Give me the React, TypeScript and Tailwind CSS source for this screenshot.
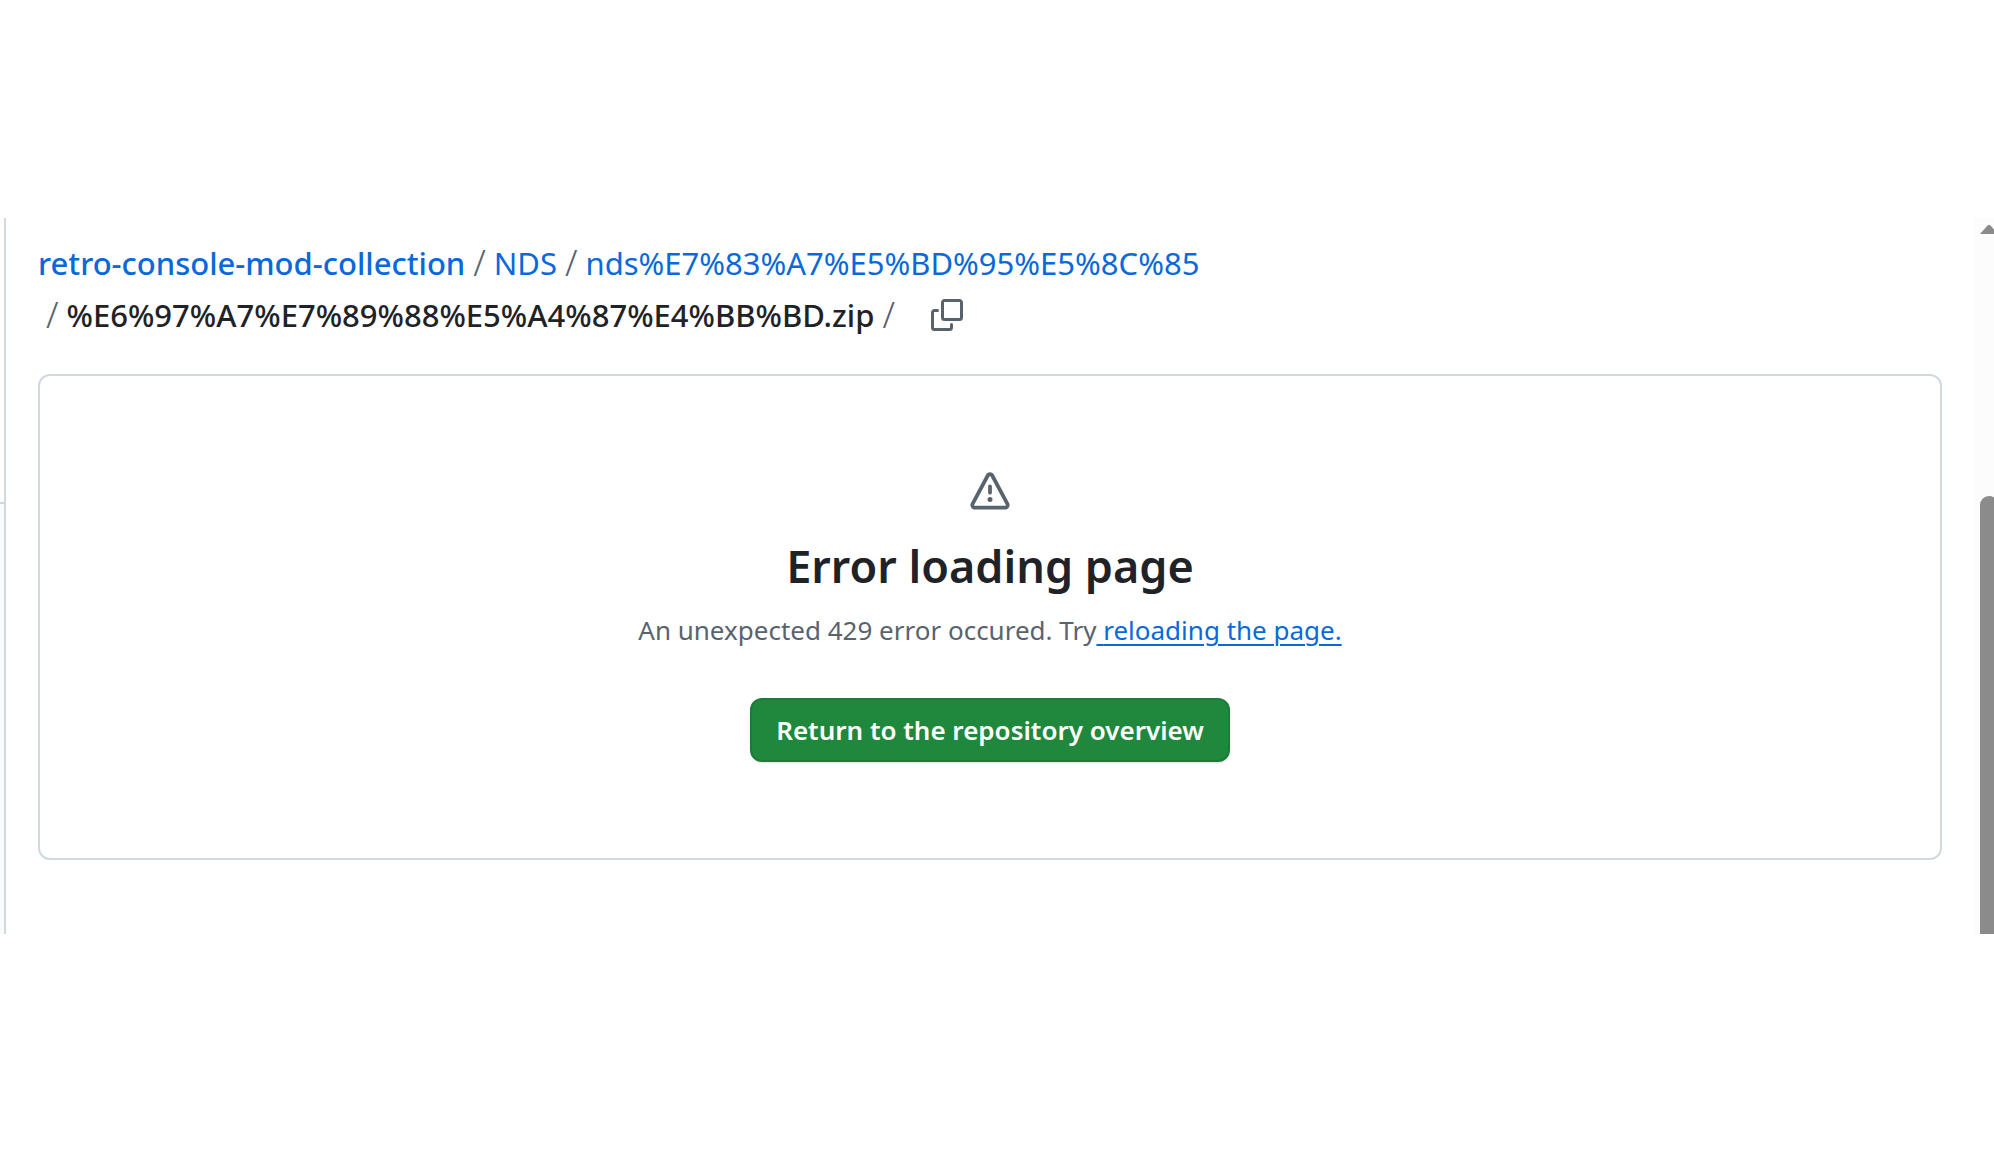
import React from 'react';

interface Crumb {
  label: string;
  href: string;
  root?: boolean;
}

const crumbs: Crumb[] = [
  { label: 'retro-console-mod-collection', href: '#root', root: true },
  { label: 'NDS', href: '#nds' },
  { label: 'nds%E7%83%A7%E5%BD%95%E5%8C%85', href: '#folder' },
];

const fileName = '%E6%97%A7%E7%89%88%E5%A4%87%E4%BB%BD.zip';

function CopyIcon() {
  return (
    <svg viewBox="0 0 16 16" className="size-8 fill-current" aria-hidden="true">
      <path d="M0 6.75C0 5.784.784 5 1.75 5h1.5a.75.75 0 0 1 0 1.5h-1.5a.25.25 0 0 0-.25.25v7.5c0 .138.112.25.25.25h7.5a.25.25 0 0 0 .25-.25v-1.5a.75.75 0 0 1 1.5 0v1.5A1.75 1.75 0 0 1 9.25 16h-7.5A1.75 1.75 0 0 1 0 14.25Z" />
      <path d="M5 1.75C5 .784 5.784 0 6.75 0h7.5C15.216 0 16 .784 16 1.75v7.5A1.75 1.75 0 0 1 14.25 11h-7.5A1.75 1.75 0 0 1 5 9.25Zm1.75-.25a.25.25 0 0 0-.25.25v7.5c0 .138.112.25.25.25h7.5a.25.25 0 0 0 .25-.25v-7.5a.25.25 0 0 0-.25-.25Z" />
    </svg>
  );
}

function AlertIcon() {
  return (
    <svg viewBox="0 0 16 16" className="size-10 fill-current" aria-hidden="true">
      <path d="M6.457 1.047c.659-1.234 2.427-1.234 3.086 0l6.082 11.378A1.75 1.75 0 0 1 14.082 15H1.918a1.75 1.75 0 0 1-1.543-2.575Zm1.763.707a.25.25 0 0 0-.44 0L1.698 13.132a.25.25 0 0 0 .22.368h12.164a.25.25 0 0 0 .22-.368Zm.53 3.996v2.5a.75.75 0 0 1-1.5 0v-2.5a.75.75 0 0 1 1.5 0ZM9 11a1 1 0 1 1-2 0 1 1 0 0 1 2 0Z" />
    </svg>
  );
}

function Separator() {
  return <span className="px-2 text-[36px] font-light text-[#59636e]">/</span>;
}

function Breadcrumbs() {
  return (
    <nav aria-label="Breadcrumbs" className="text-[31px] leading-[52px]">
      <div className="flex flex-wrap items-center">
        {crumbs.map((crumb, index) => (
          <React.Fragment key={crumb.label}>
            {index > 0 && <Separator />}
            <a
              href={crumb.href}
              className={crumb.root ? 'font-medium text-[#0969da]' : 'text-[#0969da]'}
            >
              {crumb.label}
            </a>
          </React.Fragment>
        ))}
      </div>
      <div className="flex flex-wrap items-center">
        <Separator />
        <h1 className="font-medium">{fileName}</h1>
        <Separator />
        <button type="button" aria-label="Copy path" className="ml-7 text-[#59636e]">
          <CopyIcon />
        </button>
      </div>
    </nav>
  );
}

function ErrorPanel() {
  return (
    <section className="mt-[33px] flex flex-col items-center rounded-xl border-2 border-[#d1d9e0] py-24 text-center">
      <div className="text-[#59636e]">
        <AlertIcon />
      </div>
      <h2 className="mt-[22px] text-[45px] leading-[64px] font-semibold">Error loading page</h2>
      <p className="mt-[10px] text-[26px] leading-[44px] text-[#59636e]">
        An unexpected 429 error occured. Try
        <a href="#reload" className="text-[#0969da] underline decoration-2 underline-offset-4">
          {' '}reloading the page.
        </a>
      </p>
      <button
        type="button"
        className="mt-[46px] h-16 rounded-xl border-2 border-[#1c7c37] bg-[#1f883d] px-6 text-[26px] font-semibold text-white shadow-sm"
      >
        Return to the repository overview
      </button>
    </section>
  );
}

function ScrollTrack() {
  return (
    <div className="flex w-5 shrink-0 flex-col overflow-hidden bg-[#fcfcfc] pl-1.5" aria-hidden="true">
      <svg viewBox="0 0 18 10" className="mt-1.5 h-[10px] w-[18px] shrink-0 fill-[#8b8b8b]">
        <path d="M0 10 8 1h2l8 9Z" />
      </svg>
      <div className="mt-[262px] w-[18px] grow rounded-t-full bg-[#8b8b8b]" />
    </div>
  );
}

export default function App() {
  return (
    <div className="min-h-screen bg-white pt-[218px] font-['Noto_Sans',sans-serif] text-[#1f2328]">
      <div className="flex">
        <aside className="flex w-1.5 shrink-0 flex-col border-r-2 border-[#d1d9e0]">
          <div className="h-[286px] border-b-2 border-[#d1d9e0]" />
          <div className="grow bg-[#f9fafb]" />
        </aside>
        <main className="min-w-0 grow px-8 pt-[19px] pb-[74px]">
          <Breadcrumbs />
          <ErrorPanel />
        </main>
        <ScrollTrack />
      </div>
    </div>
  );
}
